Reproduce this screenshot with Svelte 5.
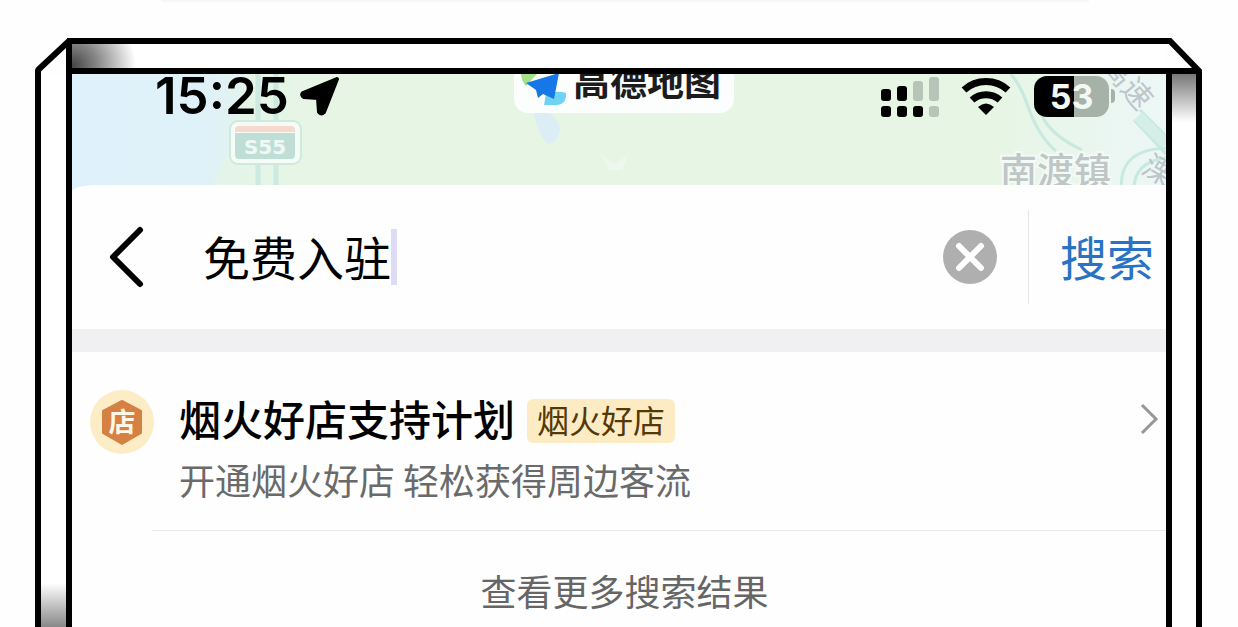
<script>
    let keyword = '免费入驻';

    const results = [
        { title: '烟火好店支持计划', tag: '烟火好店', text: '开通烟火好店 轻松获得周边客流' }
    ];

    const clear = () => {
        keyword = '';
    };
</script>

<main>
    <div class="frame">
        <svg class="corner" viewBox="0 0 37 36" width="37" height="36" aria-hidden="true">
            <path d="M3 36V32L34 3V36" fill="none" stroke="#000" stroke-width="6" stroke-linejoin="bevel" />
            <path d="M32 0H37V6H32Z" fill="#000" />
        </svg>
        <div class="beam"></div>
        <svg class="corner" viewBox="0 0 36 36" width="36" height="36" aria-hidden="true">
            <path d="M0 3H4L33 33V36M0 33H33" fill="none" stroke="#000" stroke-width="6" />
        </svg>

        <div class="rail left"></div>

        <div class="screen">
            <header>
                <svg class="map" viewBox="0 0 1094 119" preserveAspectRatio="xMidYMin slice" aria-hidden="true">
                    <defs>
                        <linearGradient id="land" x1="0" x2="1">
                            <stop offset="0" stop-color="#dff1fb" />
                            <stop offset="0.12" stop-color="#dff1f8" />
                            <stop offset="0.2" stop-color="#e6f5e4" />
                            <stop offset="0.84" stop-color="#e7f5e4" />
                            <stop offset="0.93" stop-color="#e9f6ef" />
                            <stop offset="1" stop-color="#edf7f6" />
                        </linearGradient>
                    </defs>
                    <rect width="1094" height="119" fill="url(#land)" />
                    <path d="M172 0L160 70L136 119H240V0Z" fill="#e6f5e6" opacity="0.7" />
                    <path d="M462 40Q482 34 488 54Q486 70 476 70Q466 60 462 40Z" fill="#dcedf5" />
                    <path d="M530 82l14 8l14-12l-8 18h-14z" fill="#edf7f0" />
                    <path d="M186 0V119M204 0V119" stroke="#cdeae0" stroke-width="5" fill="none" />
                    <rect x="158" y="47" width="71" height="43" rx="8" fill="#f5fbf7" stroke="#cfe9df" stroke-width="2" />
                    <path d="M163 58v-2q0-4 4-4h52q4 0 4 4v2z" fill="#f6d9cb" />
                    <path d="M163 59h60v22q0 4-4 4h-52q-4 0-4-4z" fill="#bfdfd6" />
                    <text class="sign" x="193" y="80" text-anchor="middle">S55</text>
                    <g fill="none" stroke="#c7e9df" stroke-width="3">
                        <path d="M939 0Q950 14 955 30Q966 62 984 77" />
                        <path d="M970 42Q980 62 1010 76" />
                        <path d="M1068 36L1094 62M1062 46L1094 80" />
                        <path d="M1050 119Q1044 76 1094 74" />
                        <path d="M1062 119Q1060 88 1094 84" />
                    </g>
                    <path d="M1066 42L1094 70" stroke="#d5efe8" stroke-width="11" />
                    <text class="road" x="1028" y="-8" transform="rotate(50 1028 -8)">高速</text>
                    <text class="town" x="928" y="111">南渡镇</text>
                    <text class="road" x="1068" y="98" transform="rotate(30 1068 98)">溧</text>
                </svg>

                <div class="brand">
                    <svg viewBox="0 0 48 34" width="48" height="34" aria-hidden="true">
                        <path d="M0 0H16L5 12Q1 8 0 0Z" fill="#a5e08a" />
                        <path d="M25 20Q36 16 45 19Q46 30 36 31H23Z" fill="#6fd3f5" />
                        <path d="M38 -1L33 25L22 20L17 24L15 16L5 9Z" fill="#1677e6" />
                    </svg>
                    <span>高德地图</span>
                </div>

                <div class="status">
                    <span class="time">15:25</span>
                    <svg viewBox="0 0 40 40" width="40" height="40" aria-hidden="true">
                        <path d="M37 3L3 17Q1 19 4 21L18 22L19 36Q21 39 24 36Z" fill="#000" stroke="#000" stroke-width="4" stroke-linejoin="round" />
                    </svg>
                    <svg class="signal" viewBox="0 0 58 42" width="58" height="42" role="img" aria-label="信号">
                        <g fill="#000">
                            <rect y="14" width="10" height="12" rx="3" />
                            <rect x="16" y="11" width="10" height="15" rx="3" />
                            <rect y="31" width="10" height="11" rx="3" />
                            <rect x="16" y="31" width="10" height="11" rx="3" />
                            <rect x="32" y="31" width="10" height="11" rx="3" />
                        </g>
                        <g fill="#b7c5b8">
                            <rect x="32" y="6" width="10" height="20" rx="3" />
                            <rect x="48" y="2" width="10" height="24" rx="3" />
                            <rect x="48" y="31" width="10" height="11" rx="3" />
                        </g>
                    </svg>
                    <svg class="wifi" viewBox="0 0 50 40" width="50" height="40" role="img" aria-label="Wi-Fi">
                        <path d="M3 14A33 33 0 0 1 47 14M11 24A21 21 0 0 1 39 24" fill="none" stroke="#000" stroke-width="7" />
                        <path d="M17 31Q25 24 33 31L25 39Z" fill="#000" />
                    </svg>
                    <div class="battery"><span>53</span></div>
                    <i class="nub"></i>
                </div>
            </header>

            <form class="search" on:submit|preventDefault>
                <button type="button" class="back" aria-label="返回">
                    <svg viewBox="0 0 36 62" width="36" height="62">
                        <path d="M32 4L5 31L32 58" fill="none" stroke="#000" stroke-width="6" stroke-linecap="round" stroke-linejoin="round" />
                    </svg>
                </button>
                <div class="field">
                    <input type="text" aria-label="搜索内容" bind:value={keyword} />
                    <i class="caret"></i>
                </div>
                <button type="button" class="clear" aria-label="清除" on:click={clear}>
                    <svg viewBox="0 0 54 54" width="54" height="54">
                        <circle cx="27" cy="27" r="27" fill="#afafaf" />
                        <path d="M16 16L38 38M38 16L16 38" stroke="#fff" stroke-width="6" stroke-linecap="round" />
                    </svg>
                </button>
                <button type="submit" class="submit">搜索</button>
            </form>

            <ul>
                {#each results as item}
                    <li>
                        <a href="#detail">
                            <svg class="shop" viewBox="0 0 64 64" width="64" height="64" aria-hidden="true">
                                <circle cx="32" cy="32" r="32" fill="#fdedc6" />
                                <path d="M32 11L51 21V43L32 54L13 43V21Z" fill="#d58143" stroke="#d58143" stroke-width="2" stroke-linejoin="round" />
                                <text x="32" y="42" text-anchor="middle">店</text>
                            </svg>
                            <div class="info">
                                <div class="head">
                                    <strong>{item.title}</strong>
                                    <span class="tag">{item.tag}</span>
                                </div>
                                <p>{item.text}</p>
                            </div>
                            <svg class="go" viewBox="0 0 20 34" width="20" height="34" aria-hidden="true">
                                <path d="M3 3L17 17L3 31" fill="none" stroke="#979797" stroke-width="3" />
                            </svg>
                        </a>
                    </li>
                {/each}
            </ul>
            <button type="button" class="more">查看更多搜索结果</button>
        </div>

        <div class="rail right"></div>
    </div>
</main>

<style>
    :global(body) {
        margin: 0;
        background: #fefefe;
    }
    main {
        display: flex;
        min-height: 100vh;
        box-sizing: border-box;
        padding: 38px 36px 0 35px;
        position: relative;
        font-family: "Noto Sans CJK SC", sans-serif;
        color: #000;
    }
    main::before {
        content: '';
        position: absolute;
        top: 0;
        left: 13%;
        right: 12%;
        height: 2px;
        background: #f7f7f7;
    }
    svg {
        display: block;
        flex: none;
    }
    button {
        border: 0;
        padding: 0;
        background: none;
        font: inherit;
        cursor: pointer;
    }
    .frame {
        flex: 1;
        min-width: 0;
        display: grid;
        grid-template-columns: 37px minmax(0, 1fr) 36px;
        grid-template-rows: 36px 1fr;
    }
    .beam {
        border-top: 6px solid #000;
        border-bottom: 6px solid #000;
        background: radial-gradient(ellipse 64px 60px at 0 90%, #444, #888 40%, #fff);
    }
    .rail {
        border-left: 6px solid #000;
        border-right: 6px solid #000;
    }
    .rail.left {
        background: linear-gradient(to top, #888, #fff 44px);
    }
    .rail.right {
        background: linear-gradient(#777, #fff 48px);
    }
    .screen {
        display: flex;
        flex-direction: column;
    }
    header {
        position: relative;
        height: 111px;
    }
    .map {
        position: absolute;
        top: 0;
        left: 0;
        width: 100%;
        height: 119px;
    }
    .sign {
        font: bold 20px "DejaVu Sans", sans-serif;
        fill: #eef8f4;
    }
    .town {
        font-size: 37px;
        font-weight: 500;
        fill: #bfc6c6;
        stroke: #f4faf6;
        stroke-width: 4px;
        paint-order: stroke;
    }
    .road {
        font-size: 30px;
        fill: #bcc6cb;
    }
    .brand {
        position: absolute;
        top: 0;
        left: 50%;
        width: 220px;
        height: 39px;
        margin-left: -105px;
        box-sizing: border-box;
        padding-left: 7px;
        display: flex;
        gap: 4px;
        overflow: hidden;
        background: #fcfefd;
        border-radius: 0 0 14px 14px;
    }
    .brand span {
        font-size: 37px;
        font-weight: 700;
        line-height: 12px;
        color: #1c1c1c;
        white-space: nowrap;
    }
    .status {
        position: relative;
        display: flex;
        align-items: center;
        height: 44px;
        padding: 0 51px 0 83px;
    }
    .time {
        margin-right: 11px;
        font: 600 51px/44px Inter, sans-serif;
    }
    .signal {
        margin-left: auto;
    }
    .wifi {
        margin: 0 23px 0 22px;
    }
    .battery {
        width: 75px;
        height: 41px;
        border-radius: 13px;
        background: linear-gradient(to right, #000 54%, #a6b1a8 54%);
        color: #f3f8f3;
        font: 700 34px/41px Inter, sans-serif;
        text-align: center;
    }
    .nub {
        width: 4px;
        height: 14px;
        margin-left: 2px;
        border-radius: 0 4px 4px 0;
        background: #a6b1a8;
    }
    .search {
        position: relative;
        display: flex;
        align-items: center;
        height: 144px;
        border-bottom: 23px solid #f0f0f2;
        border-radius: 24px 0 0 0 / 7px 0 0 0;
        background: #fefefe;
        padding: 0 12px 0 36px;
    }
    .field {
        flex: 1;
        min-width: 0;
        display: flex;
        align-items: center;
        margin-left: 59px;
    }
    .field input {
        field-sizing: content;
        min-width: 4px;
        max-width: 100%;
        border: 0;
        padding: 0 0 2px;
        outline: 0;
        background: none;
        color: #000;
        font: 47px/64px "Noto Sans CJK SC", sans-serif;
    }
    .caret {
        width: 6px;
        height: 56px;
        background: #dcdcf6;
    }
    .submit {
        margin-left: 31px;
        padding: 0 0 2px 31px;
        border-left: 1px solid #e6e6e6;
        font-size: 47px;
        line-height: 92px;
        color: #2a72c3;
    }
    ul {
        margin: 0;
        padding: 0;
        list-style: none;
    }
    li {
        padding-left: 18px;
    }
    a {
        display: flex;
        position: relative;
        color: inherit;
        text-decoration: none;
        padding: 38px 7px 24px 0;
    }
    a::after {
        content: '';
        position: absolute;
        left: 62px;
        right: 0;
        bottom: 0;
        height: 1px;
        background: #e8e8e8;
    }
    .shop text {
        font-size: 27px;
        font-weight: 700;
        fill: #fff6e6;
    }
    .info {
        flex: 1;
        min-width: 0;
        margin-left: 25px;
    }
    .head {
        display: flex;
        align-items: center;
        gap: 12px;
        height: 61px;
    }
    strong {
        padding-bottom: 6px;
        font-size: 42px;
        font-weight: 500;
        white-space: nowrap;
    }
    .tag {
        padding: 0 10px 4px;
        border-radius: 6px;
        background: #fdebc4;
        color: #533908;
        font-size: 32px;
        line-height: 40px;
        white-space: nowrap;
    }
    p {
        margin: 0;
        font-size: 36px;
        line-height: 56px;
        color: #6a6a6a;
    }
    .go {
        margin-top: 12px;
    }
    .more {
        align-self: center;
        padding-left: 11px;
        font-size: 36px;
        line-height: 118px;
        height: 96px;
        color: #666;
    }
</style>
